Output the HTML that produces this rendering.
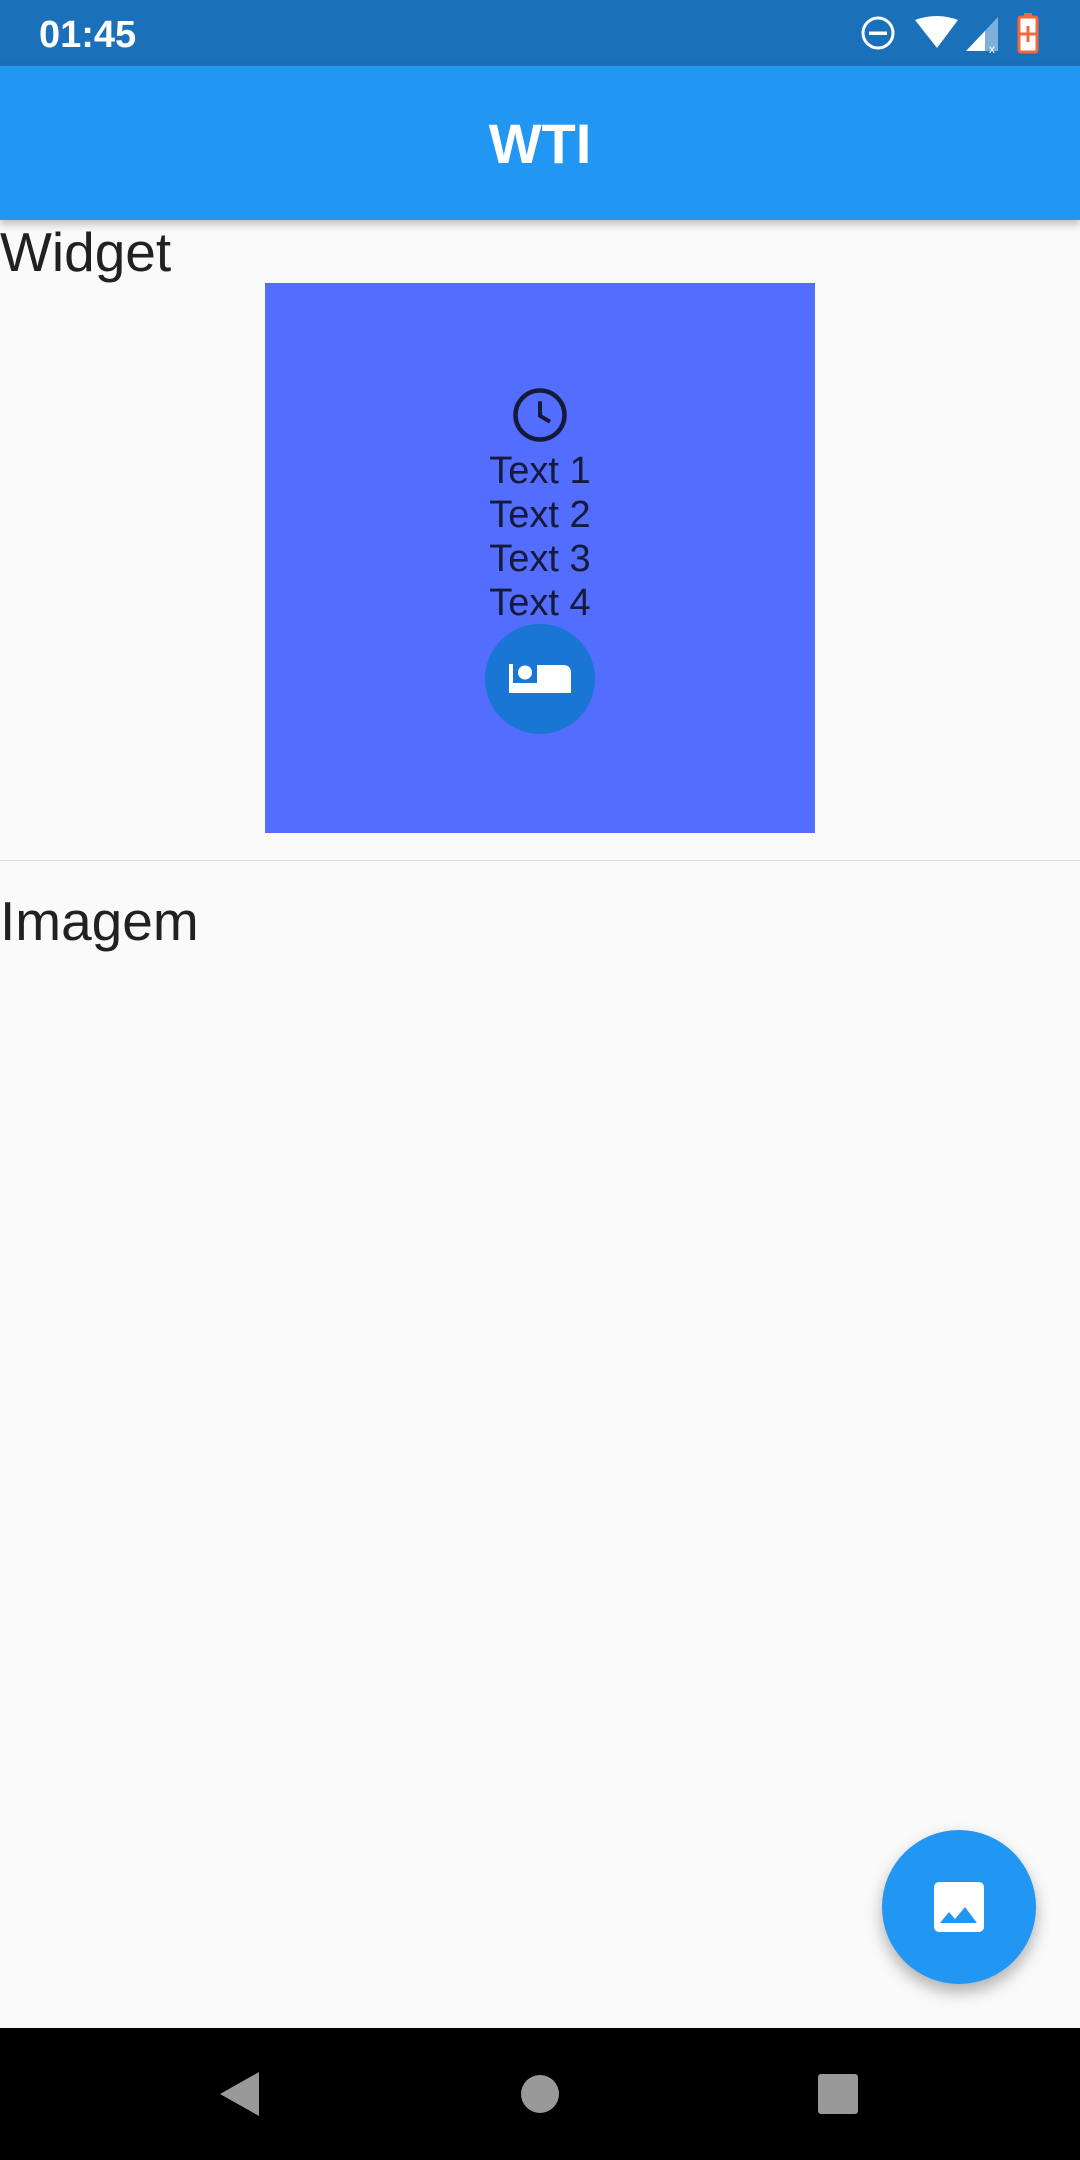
<!DOCTYPE html>
<html><head><meta charset="utf-8"><style>
body{margin:0;width:1080px;height:2160px;position:relative;background:#fafafa;font-family:"Liberation Sans",sans-serif;overflow:hidden}
.a{position:absolute;line-height:1;white-space:nowrap}
</style></head><body>
<div class="a" style="left:0;top:0;width:1080px;height:66px;background:#1a71b9"></div>
<div class="a" style="left:39px;top:16px;font-size:38px;font-weight:bold;color:#fff">01:45</div>
<svg class="a" style="left:855px;top:12px" width="190" height="44" viewBox="0 0 190 44">
<circle cx="23" cy="21" r="15" fill="none" stroke="#fff" stroke-width="3"/>
<rect x="14" y="19.5" width="18" height="3.5" fill="#fff"/>
<path d="M60 8 Q82 0 103 8 L82 36 Z" fill="#fff"/>
<path d="M111 39 L143 5 L143 39 Z" fill="#7fb0dc"/>
<path d="M111 39 L130 19 L130 39 Z" fill="#fff"/>
<text x="134" y="41" font-size="12" fill="#fff" font-family="Liberation Sans">x</text>
<rect x="164" y="5" width="18" height="35" rx="2" fill="#fff" stroke="#f4683c" stroke-width="3"/>
<rect x="169" y="1" width="8" height="5" fill="#f4683c"/>
<path d="M173 14 V30 M165 22 H181" stroke="#f4683c" stroke-width="3"/>
</svg>
<div class="a" style="left:0;top:66px;width:1080px;height:154px;background:#2196f3;box-shadow:0 4px 8px rgba(0,0,0,.25)"></div>
<div class="a" style="left:0;width:1080px;text-align:center;top:116px;font-size:56px;font-weight:bold;color:#fff">WTI</div>
<div class="a" style="left:0;top:225px;font-size:55px;color:#212121">Widget</div>
<div class="a" style="left:265px;top:283px;width:550px;height:550px;background:#536dfe"></div>
<svg class="a" style="left:510px;top:385px" width="60" height="60" viewBox="0 0 24 24"><circle cx="12" cy="12" r="9.8" fill="none" stroke="#151a3a" stroke-width="1.8"/><path d="M12 6.5V12.3L16 14.7" fill="none" stroke="#151a3a" stroke-width="1.6"/></svg>
<div class="a" style="left:0;width:1080px;text-align:center;top:452px;font-size:38px;color:#151a3a">Text 1</div>
<div class="a" style="left:0;width:1080px;text-align:center;top:496px;font-size:38px;color:#151a3a">Text 2</div>
<div class="a" style="left:0;width:1080px;text-align:center;top:540px;font-size:38px;color:#151a3a">Text 3</div>
<div class="a" style="left:0;width:1080px;text-align:center;top:584px;font-size:38px;color:#151a3a">Text 4</div>
<div class="a" style="left:485px;top:624px;width:110px;height:110px;border-radius:50%;background:#1976d2"></div>
<svg class="a" style="left:509px;top:664px" width="62" height="29" viewBox="0 0 62 29">
<path d="M0 0H4V19H28V1H54Q62 1 62 9V29H0Z" fill="#fff"/><circle cx="16" cy="8.5" r="7" fill="#fff"/></svg>
<div class="a" style="left:0;top:860px;width:1080px;height:1px;background:#dcdcdc"></div>
<div class="a" style="left:0;top:894px;font-size:55px;color:#212121">Imagem</div>
<div class="a" style="left:882px;top:1830px;width:154px;height:154px;border-radius:50%;background:#2196f3;box-shadow:0 8px 16px rgba(0,0,0,.3)"></div>
<svg class="a" style="left:934px;top:1882px" width="50" height="50" viewBox="0 0 50 50"><rect x="0" y="0" width="50" height="50" rx="5" fill="#fff"/><path d="M6 41L15 30L21 37L31 25L43 41Z" fill="#2196f3"/></svg>
<div class="a" style="left:0;top:2028px;width:1080px;height:132px;background:#000"></div>
<svg class="a" style="left:0;top:2028px" width="1080" height="132">
<path d="M220 66L259 44V88Z" fill="#999"/>
<circle cx="540" cy="66" r="19" fill="#999"/>
<rect x="818" y="46" width="40" height="40" rx="3" fill="#999"/></svg>
</body></html>
